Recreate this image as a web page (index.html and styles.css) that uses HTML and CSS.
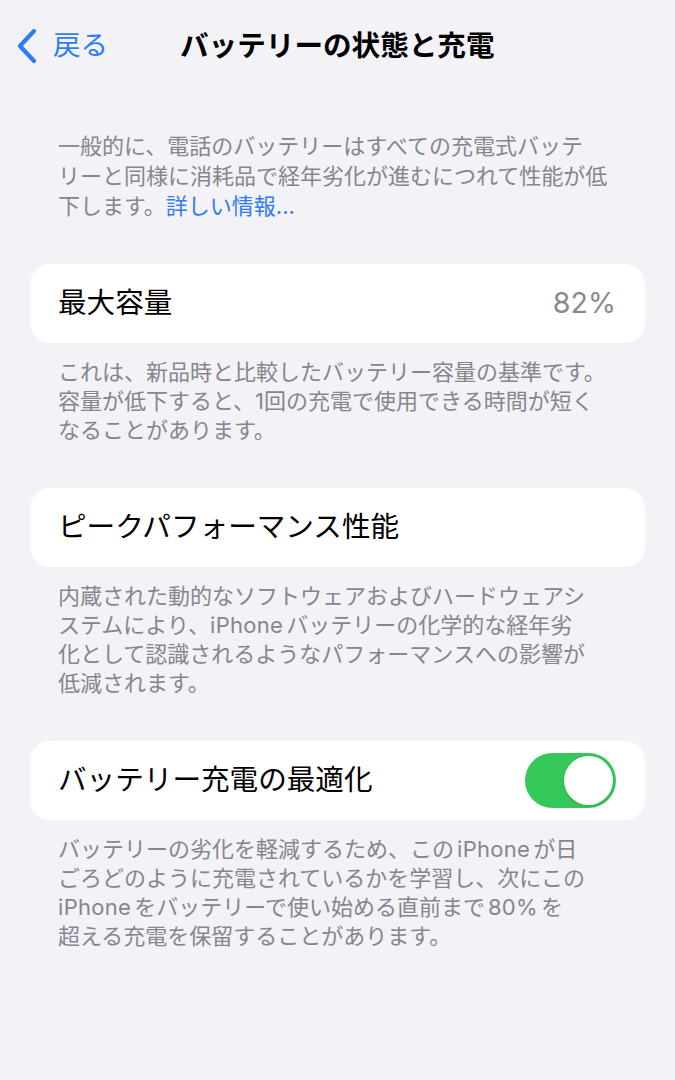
FILE: index.html
```html
<!DOCTYPE html>
<html lang="ja">
<head>
<meta charset="utf-8">
<title>バッテリーの状態と充電</title>
<link rel="stylesheet" href="styles.css">
</head>
<body>
<div class="screen">
  <header class="nav">
    <div class="back">
      <svg class="chev" width="22" height="36" viewBox="0 0 22 36"><path d="M18 3 L4 18 L18 33" fill="none" stroke="#2f7cf6" stroke-width="4.2" stroke-linecap="round" stroke-linejoin="round"/></svg>
      <span class="back-label">戻る</span>
    </div>
    <h1 class="title">バッテリーの状態と充電</h1>
  </header>

  <p class="intro">一般的に、電話のバッテリーはすべての充電式バッテ<br>リーと同様に消耗品で経年劣化が進むにつれて性能が低<br>下します。<span class="link">詳しい情報...</span></p>

  <section class="group">
    <div class="card">
      <span class="label">最大容量</span>
      <span class="value">82%</span>
    </div>
    <p class="footer">これは、新品時と比較したバッテリー容量の基準です。<br>容量が低下すると、1回の充電で使用できる時間が短く<br>なることがあります。</p>
  </section>

  <section class="group">
    <div class="card">
      <span class="label">ピークパフォーマンス性能</span>
    </div>
    <p class="footer">内蔵された動的なソフトウェアおよびハードウェアシ<br>ステムにより、<span class="lat lat-r">iPhone</span>バッテリーの化学的な経年劣<br>化として認識されるようなパフォーマンスへの影響が<br>低減されます。</p>
  </section>

  <section class="group">
    <div class="card">
      <span class="label">バッテリー充電の最適化</span>
      <span class="toggle"><span class="knob"></span></span>
    </div>
    <p class="footer">バッテリーの劣化を軽減するため、この<span class="lat">iPhone</span>が日<br>ごろどのように充電されているかを学習し、次にこの<br><span class="lat lat-r">iPhone</span>をバッテリーで使い始める直前まで<span class="lat">80%</span>を<br>超える充電を保留することがあります。</p>
  </section>
</div>
</body>
</html>
```

FILE: styles.css
```css
* { box-sizing: border-box; }
html, body {
  margin: 0;
  padding: 0;
  background: #f2f2f7;
}
body {
  font-family: "Inter", "Noto Sans CJK JP", sans-serif;
  color: #000;
}
.screen {
  width: 675px;
  min-height: 1080px;
  background: #f2f2f7;
  padding-bottom: 40px;
}
.nav {
  height: 92px;
  display: flex;
  align-items: center;
  padding-left: 16px;
}
.back {
  display: flex;
  align-items: center;
  gap: 15px;
  width: 164px;
}
.chev { display: block; }
.back-label {
  font-size: 27.5px;
  color: #2f7cf6;
  line-height: 1;
}
.title {
  margin: 0;
  font-size: 28.6px;
  font-weight: 700;
  line-height: 1;
  letter-spacing: 0;
}
.intro {
  margin: 39px 0 0;
  padding: 0 58px;
  font-size: 22px;
  line-height: 30px;
  color: #86868b;
}
.link { color: #2f7cf6; }
.group { margin-top: 43px; }
.card {
  margin: 0 30px;
  height: 79px;
  background: #fff;
  border-radius: 20px;
  display: flex;
  align-items: center;
  justify-content: space-between;
  padding: 0 29px 0 28px;
}
.label {
  font-size: 28.6px;
  line-height: 1;
}
.value {
  font-size: 28.6px;
  color: #8a8a8e;
  line-height: 1;
}
.footer {
  margin: 15px 0 0;
  padding: 0 58px;
  font-size: 22px;
  line-height: 29px;
  color: #86868b;
}
.lat {
  margin: 0 3px;
  letter-spacing: 0.3px;
}
.lat-r { margin-left: 0; }
.toggle {
  width: 91px;
  height: 55px;
  border-radius: 28px;
  background: #34c759;
  display: flex;
  align-items: center;
  justify-content: flex-end;
  padding: 3px;
}
.knob {
  width: 49px;
  height: 49px;
  border-radius: 50%;
  background: #fff;
  box-shadow: 0 1px 3px rgba(0,0,0,0.15);
}
```
